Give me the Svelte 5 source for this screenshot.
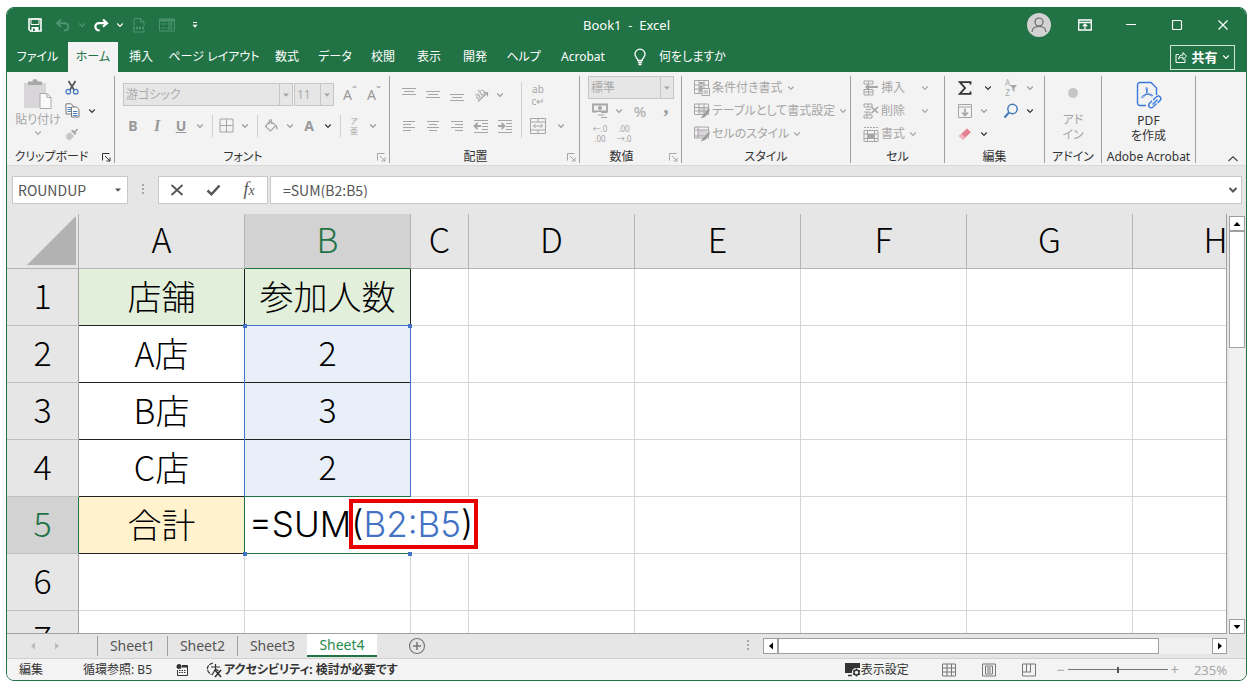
<script lang="ts">
  type Icon = [number, number, string];

  const line = 'fill="none" stroke="currentColor"';

  const icons: Record<string, Icon> = {
    chev: [8, 8, `<path d="M1.2 2.5 4 5.3 6.8 2.5" ${line} stroke-width="1.2"/>`],
    up: [12, 8, `<path d="M1.5 6 6 1.8 10.500 6" ${line} stroke-width="1.2"/>`],
    caret: [8, 6, '<path d="M1 1.500h6L4 4.800z" fill="currentColor"/>'],
    save: [14, 14, `<path d="M1 1h12v12H2.500L1 11.500z" ${line} stroke-width="1.600"/><path d="M3 1h8v5.500H3z" fill="none" stroke="currentColor"/><path d="M3.500 9h7v4.500h-7z" fill="currentColor"/><path d="M5 10.500h1.800V13H5z" fill="#217346"/>`],
    undo: [16, 14, `<path d="M6 1.500 2 5.200l4 3.600M2.300 5.200h7.500c5 0 5 7.300-1 7.300" ${line} stroke-width="1.900"/>`],
    redo: [16, 14, `<path d="M10 1.500 14 5.200l-4 3.600M13.700 5.200H6.200c-5.300 0-5 7 .5 7.300" ${line} stroke-width="2.200"/>`],
    page: [14, 16, `<path d="M2 9V1.500h6.500L12 5v4M8.500 1.500V5H12M2 13v2h10v-2" ${line}/><path d="M1 11h12" ${line} stroke-width="2.500" stroke-dasharray="2 1"/>`],
    form: [16, 14, `<path d="M.500 1h15v12H.500z" ${line}/><path d="M1 2.500h14" ${line} stroke-width="2"/><path d="M2.500 6h4M2.500 10h4M9 5h4v2H9zM9 9h4v2H9z" ${line}/>`],
    more: [8, 8, `<path d="M2 1.500h4" ${line}/><path d="M1.500 3.800h5L4 6.800z" fill="currentColor"/>`],
    user: [24, 24, '<circle cx="12" cy="12" r="12" fill="#d2d2d2"/><circle cx="12" cy="9" r="4" fill="none" stroke="#666" stroke-width="1.200"/><path d="M5 19c0-7.500 14-7.500 14 0" fill="none" stroke="#666" stroke-width="1.200"/>'],
    ribbonOpts: [14, 12, `<path d="M.700 1h12.600v10H.700zM1 3.500h12" ${line} stroke-width="1.300"/><path d="M7 10V5.500M4.800 7.300 7 5.200l2.200 2.100" ${line} stroke-width="1.300"/>`],
    min: [12, 12, `<path d="M1 5.500h10" ${line} stroke-width="1.200"/>`],
    max: [12, 12, `<rect x="1.500" y="1.500" width="9" height="9" rx="1" ${line} stroke-width="1.200"/>`],
    close: [12, 12, `<path d="m1.500 1.500 9 9m0-9-9 9" ${line} stroke-width="1.200"/>`],
    bulb: [14, 18, `<path d="M4.800 12.500c0-2.300-2.800-3-2.800-6.300a5 5 0 0 1 10 0c0 3.300-2.800 4-2.800 6.300zM5 14.500h4M5.500 16.500h3" ${line} stroke-width="1.300"/>`],
    share: [12, 12, `<path d="M4 3.500H1v8h9V8" ${line}/><path d="M3.500 8c.5-3 2-4 4.500-4V1.500l3.500 3.700L8 8.500V6.300c-2 0-3.500.4-4.500 1.700z" ${line}/>`],
    paste: [30, 32, '<path d="M1 5h22v25H1z" fill="#d9d6da"/><path d="M5 3.500h4.500a2.500 2.500 0 0 1 5 0H19V7H5z" fill="#a8a8a8"/><path d="M17 15.500h7l4 4v11H17z" fill="#fafafa" stroke="#aaa"/><path d="M24 15.500v4h4" fill="none" stroke="#aaa"/>'],
    cut: [14, 15, '<path d="m3.500 1 6 9.500M10.500 1l-6 9.500" fill="none" stroke="#555" stroke-width="1.700"/><circle cx="3.300" cy="11.700" r="2.300" fill="none" stroke="#4a80c0" stroke-width="1.300"/><circle cx="10.700" cy="11.700" r="2.300" fill="none" stroke="#4a80c0" stroke-width="1.300"/>'],
    copy: [15, 15, '<path d="M1 .800h5L8.500 3v8H1z" fill="#fff" stroke="#777"/><path d="M2.500 4.500h4M2.500 6.500h4M2.500 8.500h4" stroke="#4a80c0"/><path d="M6.500 4h4.800L14 6.500V14H6.500z" fill="#fff" stroke="#777"/><path d="M8 8.500h4.500M8 10.500h4.500M8 12.500h4.500" stroke="#4a80c0"/>'],
    brush: [14, 14, '<path d="m1 8 4-3 4 4-4 4.500L1.500 12z" fill="#c8c5c8"/><path d="m6 4 4 4 1.500-1.500-4-4z" fill="#aaa"/><path d="m9 4.500 3.500-3L13 2.500 10 5.800z" fill="#999"/>'],
    launch: [9, 9, `<path d="M.500 7.500v-7h7M3 3l5 5M8 4.500V8H4.500" ${line}/>`],
    grid: [15, 15, `<path d="M1 1h13v13H1zM7.500 1v13M1 7.500h13" ${line}/>`],
    bucket: [15, 14, `<path d="M6 2 1.500 7.500 6.500 12 12 6.500 6.500 2.500M5.500 5V1.500c0-1 2-1 2 0V5" ${line} stroke-width="1.200"/><path d="M12 6c1.500 1 2 2.500 1.300 5-1.300-.500-1.500-2.500-1.300-5z" fill="currentColor"/>`],
    alignT: [16, 16, `<path d="M1 1.500h14M3 4.500h10M1 7.500h14" ${line}/>`],
    alignM: [16, 16, `<path d="M1 4.500h14M3 7.500h10M1 10.500h14" ${line}/>`],
    alignB: [16, 16, `<path d="M1 7.500h14M3 10.500h10M1 13.500h14" ${line}/>`],
    left: [14, 12, `<path d="M1 1.500h12M1 4.500h8M1 7.500h12M1 10.500h8" ${line}/>`],
    center: [14, 12, `<path d="M1 1.500h12M3 4.500h8M1 7.500h12M3 10.500h8" ${line}/>`],
    right: [14, 12, `<path d="M1 1.500h12M5 4.500h8M1 7.500h12M5 10.500h8" ${line}/>`],
    outdent: [16, 14, `<path d="M1 1.500h14M9 4.500h6M9 7.500h6M9 10.500h6M1 13.500h14" ${line}/><path d="M8 7H2m2.500-3-3 3 3 3" ${line} stroke-width="1.800"/>`],
    indent: [16, 14, `<path d="M1 1.500h14M9 4.500h6M9 7.500h6M9 10.500h6M1 13.500h14" ${line}/><path d="M1 7h6M4.500 4l3 3-3 3" ${line} stroke-width="1.800"/>`],
    orient: [20, 20, `<text x="4" y="13" font-size="10" transform="rotate(-38 8 11)" fill="currentColor">ab</text><path d="M7 16.500 16 8M16.500 11.500v-4h-4" ${line} stroke-width="1.200"/>`],
    merge: [16, 16, `<path d="M.500 .500h15v15H.500zM.500 4h15M.500 12h15M8 .500V4M8 12v3.500M3.500 8h9M5.500 6l-2 2 2 2M10.500 6l2 2-2 2" ${line}/>`],
    money: [16, 16, `<path d="M1 1.500h14v7H1z" ${line} stroke-width="1.800"/><circle cx="8" cy="5" r="2" fill="currentColor"/><path d="M5 9h10v7H5z" fill="#f3f3f3"/><path d="M9 9.500h6M6 12h6M9 14.500h6" ${line} stroke-width="1.200"/>`],
    cond: [16, 16, `<path d="M.500 .500h14v13H.500zM5 .500v13M10 .500v13M.500 5h14M.500 9h14" ${line}/><path d="M5.500 2h4v2h-4zM5.500 6h3v6h-3z" fill="currentColor"/><path d="M8 8.500h7.500v7H8z" fill="#f3f3f3" stroke="currentColor"/><path d="M9.500 11h4.500M9.500 13h4.500" ${line}/>`],
    fmt: [16, 16, `<path d="M5 4.500h9v6H5z" fill="#d9d3da"/><path d="M.500 1h14v10.500H.500zM5 1v10.500M10 1v10.500M.500 4.500h14M.500 8h14" ${line}/><path d="m15.500 5-6 6.500-3 4 4.500-1.500 4.500-6z" fill="#999"/>`],
    style: [16, 16, `<path d="M4 4h9v6H4z" fill="#d9d3da"/><path d="M.500 1h14v11H.500zM4 1v11M.500 4h14M.500 10h10" ${line}/><path d="m15.500 5-6 6.500-3 4 4.500-1.500 4.500-6z" fill="#999"/>`],
    ins: [16, 16, `<path d="M1 1h9v3H1zM1 12h9v3H1zM1 9.500h9V12M1 9.500V12M5.500 1v3M5.500 9.500V15" ${line}/><path d="M3 7h12M5.500 4.800 3.200 7l2.300 2.200" ${line} stroke-width="1.800"/>`],
    del: [16, 16, `<path d="M1 1h8v3H1zM1 12h8v3H1zM1 9h6v3M5 1v3M4 9v6M3 6.500h5" ${line}/><path d="m8.500 4 6.500 6m0-6-6.500 6" ${line} stroke-width="1.700"/>`],
    cellFmt: [16, 16, `<path d="M1 4.500h14v11H1zM4.500 4.500v11M11.500 4.500v11M1 8h14M1 12.500h14" ${line}/><path d="M5 8h6v4.500H5z" fill="currentColor"/><path d="M1 1.500h14" ${line} stroke-dasharray="2 1"/>`],
    sum: [14, 14, `<path d="M12.500 3.500V1.200H1.800L7 7l-5.200 5.800h10.700v-2.300" ${line} stroke-width="1.800"/>`],
    funnel: [7, 8, '<path d="M0 1h7L4.500 4v3.500l-2-1V4z" fill="currentColor"/>'],
    fill: [14, 14, `<path d="M.500 .500h13v13H.500zM.500 3h13" ${line}/><path d="M7 4.500v7M4 8.500l3 3 3-3" ${line} stroke-width="1.700"/>`],
    find: [16, 16, '<circle cx="9.500" cy="6" r="4.700" fill="none" stroke="#3f78bd" stroke-width="1.500"/><path d="M6 9.500 1.500 14.500" stroke="#3f78bd" stroke-width="2"/>'],
    eraser: [14, 14, '<path d="m1 9 8-7.500 4 3.700L5 12.700z" fill="#e4808f"/><path d="m1 9 2.500-2.300 4 3.700L5 12.700z" fill="#f2b3bc"/>'],
    dot: [12, 12, '<circle cx="6" cy="6" r="5" fill="#c6c6c6"/>'],
    pdf: [26, 30, '<path d="M10 24.500H4A2.500 2.500 0 0 1 1.500 22V4A2.500 2.500 0 0 1 4 1.500h11l5.500 5.500v7" fill="none" stroke="#3b78dc" stroke-width="1.400"/><path d="M10.500 6.500c1.500 0 1 3-.200 5.500-1.300 2.700-3.300 5.200-4.500 4.700-1.500-1 3.200-3.200 6.200-3.500 2.500-.300 4.800.300 4.500 1.500-.500 1-3.500-.800-5-3-1.200-2-2-5.200-1-5.200z" fill="none" stroke="#3b78dc"/><path d="m17 19 3.500-3.200c2.800-2 5.800 1 3.500 3.800l-2.500 2.500M20.500 22.500 17 26c-2.800 2-5.800-1-3.500-3.800l2.500-2.500M16.500 23.500l5-5" fill="none" stroke="#3b78dc" stroke-width="1.400"/>'],
    grip: [4, 14, '<path d="M1 1h2v2H1zM1 5h2v2H1zM1 9h2v2H1z" fill="#a8a8a8"/>'],
    cancel: [14, 12, `<path d="m1.500 1 11 10M12.500 1l-11 10" ${line} stroke-width="1.800"/>`],
    check: [15, 12, `<path d="m1.500 6.500 4 3.800L13.500 1.500" ${line} stroke-width="2.500"/>`],
    down: [10, 8, `<path d="M1.500 2 5 5.500 8.500 2" ${line} stroke-width="2"/>`],
    triL: [6, 8, '<path d="M5 .500v7L1 4z" fill="currentColor"/>'],
    triR: [6, 8, '<path d="M1 .500v7L5 4z" fill="currentColor"/>'],
    triU: [8, 6, '<path d="M.500 5h7L4 1z" fill="currentColor"/>'],
    triD: [8, 6, '<path d="M.500 1h7L4 5z" fill="currentColor"/>'],
    corner: [50, 50, '<path d="M50 0v49H1z" fill="#b2b2b2"/>'],
    add: [18, 18, `<circle cx="9" cy="9" r="7.500" ${line} stroke-width="1.200"/><path d="M9 5v8M5 9h8" ${line} stroke-width="1.500"/>`],
    macro: [12, 12, `<circle cx="3" cy="2.500" r="2.500" fill="currentColor"/><path d="M6 1.500h5.500v10h-10V6" ${line}/><path d="M6 2.500h5.500" ${line} stroke-width="2"/><path d="M3 6.500h7M3 8.500h7" ${line} stroke-dasharray="1.500 1"/>`],
    a11y: [17, 16, `<path d="M7 1C-.500 3 0 10 5.500 12.500" ${line} stroke-dasharray="4 1" stroke-width="1.200"/><path d="M5 5h9M9.500 2v5l-3.500 6M9.500 7l3 2" ${line} stroke-width="1.200"/><path d="m9 8 6 7m0-7-6 7" ${line} stroke-width="1.600"/>`],
    display: [16, 15, `<path d="M0 1h15v5h-4a4 4 0 0 0-4 5H0z" fill="currentColor"/><path d="M3 13.500h4" ${line} stroke-width="1.500"/><circle cx="11.500" cy="10.500" r="2.500" ${line} stroke-width="1.500"/><path d="M11.500 6.500V8M11.500 13v1.500M8 8.500l1.300.8M13.800 11.700l1.300.8M8 12.500l1.300-.8M13.800 9.300l1.300-.8" ${line} stroke-width="1.300"/>`],
    viewNormal: [14, 14, `<path d="M.500 1h13v12H.500zM5 1v12M9.500 1v12M.500 5h13M.500 9h13" ${line}/>`],
    viewPage: [14, 14, `<path d="M.500 1h13v12H.500zM3.500 3h7v8h-7zM5 5h4M5 7h4M5 9h4" ${line}/>`],
    viewBreak: [14, 14, `<path d="M.500 1h13v12H.500zM4.500 1v8M8.500 1v8M.500 9h8.500" ${line}/>`],
  };

  const tabs = ['ファイル', 'ホーム', '挿入', 'ページ レイアウト', '数式', 'データ', '校閲', '表示', '開発', 'ヘルプ', 'Acrobat'];
  const columns = ['A', 'B', 'C', 'D', 'E', 'F', 'G', 'H'];
  const blanks = columns.slice(2);
  const rows = [
    { a: '店舗', b: '参加人数', kind: 'head' },
    { a: 'A店', b: '2', kind: 'data' },
    { a: 'B店', b: '3', kind: 'data' },
    { a: 'C店', b: '2', kind: 'data' },
    { a: '合計', b: '', kind: 'total' },
    { a: '', b: '', kind: '' },
    { a: '', b: '', kind: '' },
  ];
  const sheets = ['Sheet1', 'Sheet2', 'Sheet3', 'Sheet4'];

  let activeTab = 'ホーム';
  let activeSheet = 'Sheet4';
  let nameBox = 'ROUNDUP';
  let formula = '=SUM(B2:B5)';
  let zoom = 50;
</script>

{#snippet icon(name: string)}
  <svg class="icon" width={icons[name][0]} height={icons[name][1]} viewBox="0 0 {icons[name][0]} {icons[name][1]}" aria-hidden="true">{@html icons[name][2]}</svg>
{/snippet}

{#snippet tool(name: string, label: string)}
  <button class="tool" aria-label={label}>{@render icon(name)}</button>
{/snippet}

{#snippet chev(label: string, dark = false)}
  <button class="chev" class:dark aria-label={label}>{@render icon('chev')}</button>
{/snippet}

{#snippet combo(value: string, label: string)}
  <div class="combo">
    <select aria-label={label} disabled><option>{value}</option></select>
    <span class="combo-arrow">{@render icon('caret')}</span>
  </div>
{/snippet}

{#snippet foot(label: string, launcher = '')}
  <div class="foot" class:has-launcher={launcher}>
    <span>{label}</span>
    {#if launcher}
      <button class="launcher {launcher}" aria-label="{label}の設定">{@render icon('launch')}</button>
    {/if}
  </div>
{/snippet}

<div class="window">
  <header>
    <div class="titlebar">
      <div class="quick">
        <button class="tool" aria-label="上書き保存">{@render icon('save')}</button>
        <button class="tool faded" aria-label="元に戻す">{@render icon('undo')}</button>
        <button class="chev faded" aria-label="元に戻す履歴">{@render icon('chev')}</button>
        <button class="tool" aria-label="やり直し">{@render icon('redo')}</button>
        <button class="chev" aria-label="やり直し履歴">{@render icon('chev')}</button>
        <button class="tool faded" aria-label="印刷プレビュー">{@render icon('page')}</button>
        <button class="tool faded" aria-label="フォーム">{@render icon('form')}</button>
        <button class="tool" aria-label="カスタマイズ">{@render icon('more')}</button>
      </div>
      <h1>Book1&nbsp; -&nbsp; Excel</h1>
      <div class="controls">
        <button aria-label="アカウント">{@render icon('user')}</button>
        <button aria-label="リボンの表示オプション">{@render icon('ribbonOpts')}</button>
        <button aria-label="最小化">{@render icon('min')}</button>
        <button aria-label="最大化">{@render icon('max')}</button>
        <button aria-label="閉じる">{@render icon('close')}</button>
      </div>
    </div>
    <div class="tabbar">
      <nav>
        {#each tabs as tab}
          <button class:active={tab === activeTab} on:click={() => (activeTab = tab)}>{tab}</button>
        {/each}
      </nav>
      <button class="tell">{@render icon('bulb')}何をしますか</button>
      <button class="share">{@render icon('share')}<b>共有</b>{@render icon('chev')}</button>
    </div>
  </header>

  <div class="ribbon">
    <section class="group clipboard">
      <div class="body">
        <button class="big">{@render icon('paste')}<span>貼り付け</span>{@render icon('chev')}</button>
        <div class="stack">
          <div class="line">{@render tool('cut', '切り取り')}</div>
          <div class="line">{@render tool('copy', 'コピー')}{@render chev('コピーのオプション', true)}</div>
          <div class="line">{@render tool('brush', '書式のコピー')}</div>
        </div>
      </div>
      {@render foot('クリップボード', 'dark')}
    </section>

    <section class="group font">
      <div class="body two">
        <div class="line">
          <div class="font-name">{@render combo('游ゴシック', 'フォント')}</div>
          <div class="font-size">{@render combo('11', 'フォント サイズ')}</div>
          <button class="tool glyph" aria-label="フォント サイズの拡大">A<sup>ˆ</sup></button>
          <button class="tool glyph" aria-label="フォント サイズの縮小">A<sup>ˇ</sup></button>
        </div>
        <div class="line">
          <button class="tool glyph"><b>B</b></button>
          <button class="tool glyph serif"><i>I</i></button>
          <button class="tool glyph"><b><u>U</u></b></button>
          {@render chev('下線')}
          <span class="rule"></span>
          {@render tool('grid', '罫線')}{@render chev('罫線の種類')}
          <span class="rule"></span>
          {@render tool('bucket', '塗りつぶし')}{@render chev('塗りつぶしの色')}
          <button class="tool glyph"><b>A</b></button>{@render chev('フォントの色', true)}
          <span class="rule"></span>
          <button class="tool ruby"><span>ア</span><span>亜</span></button>{@render chev('ふりがな')}
        </div>
      </div>
      {@render foot('フォント', 'dim')}
    </section>

    <section class="group align">
      <div class="body">
        <div class="two align-left">
          <div class="line">
            {@render tool('alignT', '上揃え')}{@render tool('alignM', '上下中央揃え')}{@render tool('alignB', '下揃え')}
            {@render tool('orient', '方向')}{@render chev('方向の種類')}
          </div>
          <div class="line">
            {@render tool('left', '左揃え')}{@render tool('center', '中央揃え')}{@render tool('right', '右揃え')}
            {@render tool('outdent', 'インデントを減らす')}{@render tool('indent', 'インデントを増やす')}
          </div>
        </div>
        <span class="rule tall"></span>
        <div class="two">
          <div class="line"><button class="tool wrap"><span>ab</span><span>c↵</span></button></div>
          <div class="line merge">{@render tool('merge', 'セルを結合して中央揃え')}{@render chev('結合の種類')}</div>
        </div>
      </div>
      {@render foot('配置', 'dim')}
    </section>

    <section class="group number">
      <div class="body stack">
        <div class="line">{@render combo('標準', '数値の書式')}</div>
        <div class="line">
          {@render tool('money', '通貨')}{@render chev('通貨の種類')}
          <button class="tool percent">%</button>
          <button class="tool glyph serif comma"><b>,</b></button>
        </div>
        <div class="line">
          <button class="tool digits"><span>←.0</span><span>.00</span></button>
          <button class="tool digits"><span>.00</span><span>→.0</span></button>
        </div>
      </div>
      {@render foot('数値', 'dim')}
    </section>

    <section class="group styles">
      <div class="body stack">
        <button class="item">{@render icon('cond')}<span>条件付き書式</span>{@render icon('chev')}</button>
        <button class="item">{@render icon('fmt')}<span>テーブルとして書式設定</span>{@render icon('chev')}</button>
        <button class="item">{@render icon('style')}<span>セルのスタイル</span>{@render icon('chev')}</button>
      </div>
      {@render foot('スタイル')}
    </section>

    <section class="group cells">
      <div class="body stack">
        <button class="item spread">{@render icon('ins')}<span>挿入</span>{@render icon('chev')}</button>
        <button class="item spread">{@render icon('del')}<span>削除</span>{@render icon('chev')}</button>
        <button class="item">{@render icon('cellFmt')}<span>書式</span>{@render icon('chev')}</button>
      </div>
      {@render foot('セル')}
    </section>

    <section class="group edit">
      <div class="body">
        <div class="stack">
          <div class="line dark wide-chev">{@render tool('sum', 'オート SUM')}{@render chev('集計方法', true)}</div>
          <div class="line">{@render tool('fill', 'フィル')}{@render chev('フィルの種類')}</div>
          <div class="line">{@render tool('eraser', 'クリア')}{@render chev('クリアの種類', true)}</div>
        </div>
        <div class="stack">
          <div class="line">
            <button class="tool sort"><span class="digits"><span>A</span><span>Z</span></span>{@render icon('funnel')}</button>
            {@render chev('並べ替えの種類')}
          </div>
          <div class="line">{@render tool('find', '検索と選択')}{@render chev('検索の種類', true)}</div>
        </div>
      </div>
      {@render foot('編集')}
    </section>

    <section class="group addin">
      <div class="body">
        <button class="big">{@render icon('dot')}<span>アド<br />イン</span></button>
      </div>
      {@render foot('アドイン')}
    </section>

    <section class="group acrobat">
      <div class="body">
        <button class="big dark">{@render icon('pdf')}<span>PDF<br />を作成</span></button>
      </div>
      {@render foot('Adobe Acrobat')}
    </section>

    <button class="collapse" aria-label="リボンを折りたたむ">{@render icon('up')}</button>
  </div>

  <div class="formula-bar">
    <div class="name-box">
      <input aria-label="名前ボックス" bind:value={nameBox} />
      <button aria-label="名前の一覧">{@render icon('caret')}</button>
    </div>
    <span class="grip">{@render icon('grip')}</span>
    <div class="entry-tools">
      <button aria-label="キャンセル">{@render icon('cancel')}</button>
      <button aria-label="入力">{@render icon('check')}</button>
      <button class="fx"><i>f<small>x</small></i></button>
    </div>
    <div class="formula">
      <input aria-label="数式バー" bind:value={formula} />
      <button aria-label="数式バーの展開">{@render icon('down')}</button>
    </div>
  </div>

  <main>
    <div class="pane">
      <table>
        <colgroup>
          <col class="c-num" />
          {#each columns as c}<col class={c === 'C' ? 'c-narrow' : 'c-wide'} />{/each}
        </colgroup>
        <thead>
          <tr>
            <td class="all">{@render icon('corner')}</td>
            {#each columns as c}<th scope="col" class:current={c === 'B'}>{c}</th>{/each}
          </tr>
        </thead>
        <tbody>
          {#each rows as row, i}
            <tr class={row.kind}>
              <th scope="row" class:current={i === 4}>{i + 1}</th>
              <td class="a">{row.a}</td>
              <td class="b">
                {#if i === 1}
                  <div class="range"><i></i><i></i><i></i><i></i></div>
                {/if}
                {#if row.kind === 'total'}
                  <div class="editing">=SUM<span class="args">(<em>B2:B5</em>)</span></div>
                {:else}
                  {row.b}
                {/if}
              </td>
              {#each blanks as _}<td></td>{/each}
            </tr>
          {/each}
        </tbody>
      </table>
    </div>
    <div class="vscroll">
      <button aria-label="上へスクロール">{@render icon('triU')}</button>
      <span class="thumb"></span>
      <span class="track"></span>
      <button aria-label="下へスクロール">{@render icon('triD')}</button>
    </div>
  </main>

  <div class="sheetbar">
    <div class="sheet-nav">
      <button aria-label="前のシート">{@render icon('triL')}</button>
      <button aria-label="次のシート">{@render icon('triR')}</button>
    </div>
    {#each sheets as sheet}
      <button class="sheet" class:active={sheet === activeSheet} on:click={() => (activeSheet = sheet)}>{sheet}</button>
    {/each}
    <button class="add" aria-label="新しいシート">{@render icon('add')}</button>
    <span class="grip">{@render icon('grip')}</span>
    <div class="hscroll">
      <button aria-label="左へスクロール">{@render icon('triL')}</button>
      <span class="thumb"></span>
      <span class="track"></span>
      <button aria-label="右へスクロール">{@render icon('triR')}</button>
    </div>
  </div>

  <footer>
    <span class="mode">編集</span>
    <span class="circular">循環参照: B5</span>
    <button aria-label="マクロの記録">{@render icon('macro')}</button>
    <button class="a11y">{@render icon('a11y')}<b>アクセシビリティ: 検討が必要です</b></button>
    <button class="display">{@render icon('display')}表示設定</button>
    <div class="views">
      <button aria-label="標準">{@render icon('viewNormal')}</button>
      <button aria-label="ページ レイアウト">{@render icon('viewPage')}</button>
      <button aria-label="改ページ プレビュー">{@render icon('viewBreak')}</button>
    </div>
    <div class="zoom">
      <button>−</button>
      <input type="range" min="0" max="100" aria-label="ズーム" bind:value={zoom} />
      <button>+</button>
      <span>235%</span>
    </div>
  </footer>
</div>

<style>
  :global(body) {
    margin: 0;
    background: #fff;
  }

  .window {
    --green: #217346;
    --ui: 'Noto Sans', 'Noto Sans CJK JP', sans-serif;
    --cell: 'Noto Sans CJK JP', sans-serif;
    display: flex;
    flex-direction: column;
    box-sizing: border-box;
    height: calc(100vh - 14px);
    margin: 7px 8px 7px 6px;
    border: 1px solid var(--green);
    border-radius: 8px;
    overflow: hidden;
    background: #e6e6e6;
    color: #333;
    font-family: var(--ui);
    font-size: 12px;
    line-height: 16px;
    font-feature-settings: 'palt';
    white-space: nowrap;
  }

  button,
  input,
  select {
    font: inherit;
    font-feature-settings: inherit;
    color: inherit;
    background: none;
    border: none;
    border-radius: 0;
    padding: 0;
    margin: 0;
    outline: none;
    min-width: 0;
    box-sizing: border-box;
  }

  button {
    display: flex;
    align-items: center;
    justify-content: center;
    flex: none;
    white-space: nowrap;
  }

  .icon {
    display: block;
    flex: none;
    overflow: visible;
  }

  /* title and tabs */
  header {
    background: var(--green);
    color: #fff;
  }

  .titlebar {
    display: grid;
    grid-template-columns: 1fr auto 1fr;
    align-items: center;
    height: 34px;
  }

  .quick {
    display: flex;
    padding-left: 14px;
  }

  .quick .tool {
    width: 28px;
  }

  .quick .chev {
    width: 10px;
  }

  .quick .chev,
  .quick .tool {
    color: #fff;
  }

  .quick .faded {
    color: #4f9470;
  }

  h1 {
    margin: 0;
    font-size: 13px;
    font-weight: 400;
    line-height: 20px;
  }

  .controls {
    display: flex;
    justify-content: flex-end;
  }

  .controls button {
    width: 46px;
  }

  .tabbar {
    display: flex;
    align-items: center;
    height: 30px;
    padding-right: 11px;
  }

  nav {
    display: grid;
    grid-template-columns: 61px 50px 46px 100px 46px 50px 46px 46px 46px 51px 68px;
    align-self: stretch;
  }

  nav .active {
    background: #f3f3f3;
    color: var(--green);
  }

  .tell {
    gap: 12px;
    margin-left: 16px;
  }

  .share {
    gap: 4px;
    height: 25px;
    width: 65px;
    margin-left: auto;
    border: 1px solid #cfe3d7;
    font-size: 13px;
  }

  /* ribbon */
  .ribbon {
    display: flex;
    height: 94px;
    background: #f3f3f3;
    border-bottom: 1px solid #dadada;
    color: #a6a6a6;
    box-sizing: border-box;
  }

  .group {
    display: flex;
    flex-direction: column;
    justify-content: space-between;
    box-sizing: border-box;
    flex: none;
    margin: 4px 0 2px;
    border-right: 1px solid #a0a0a0;
  }

  .clipboard { width: 108px; }
  .font { width: 275px; }
  .align { width: 190px; }
  .number { width: 102px; }
  .styles { width: 169px; }
  .cells { width: 94px; }
  .edit { width: 100px; }
  .addin { width: 57px; }
  .acrobat { width: 94px; }

  .body {
    display: flex;
  }

  .stack,
  .two {
    display: flex;
    flex-direction: column;
  }

  .line {
    display: flex;
    align-items: center;
    height: 23px;
  }

  .two {
    padding-top: 3px;
  }

  .two .line {
    height: 31px;
  }

  .tool {
    width: 24px;
    height: 22px;
  }

  .chev {
    width: 14px;
    height: 22px;
    color: #999;
  }

  .dark {
    color: #333;
  }

  .rule {
    width: 1px;
    height: 22px;
    margin: 0 1px 0 5px;
    background: #d0d0d0;
  }

  .rule.tall {
    height: 56px;
    margin: 6px 4px 0 2px;
  }

  .foot {
    position: relative;
    display: flex;
    justify-content: center;
    color: #333;
    line-height: 12px;
  }

  .has-launcher {
    padding-right: 18px;
  }

  .launcher {
    position: absolute;
    right: 3px;
    top: 2px;
  }

  .dim {
    color: #a6a6a6;
  }

  .big {
    flex-direction: column;
    justify-content: flex-start;
    line-height: 15px;
    gap: 2px;
  }

  .clipboard .big {
    width: 46px;
    margin-left: 8px;
    padding-top: 2px;
  }

  .clipboard .stack .line {
    gap: 2px;
  }

  .clipboard .tool {
    width: 22px;
  }

  .font .body {
    padding-left: 6px;
  }

  .combo {
    display: flex;
    flex: 1;
    height: 23px;
    box-sizing: border-box;
    border: 1px solid #c6c6c6;
    background: #e6e6e6;
  }

  .combo select {
    flex: 1;
    appearance: none;
    padding-left: 2px;
    color: #aaa;
    opacity: 1;
  }

  .combo-arrow {
    display: flex;
    align-items: center;
    justify-content: center;
    width: 12px;
    border-left: 1px solid #c6c6c6;
  }

  .font-name {
    display: flex;
    width: 170px;
    margin-left: 2px;
  }

  .font-size {
    display: flex;
    width: 40px;
    margin: 0 4px 0 1px;
  }

  .glyph {
    font-size: 14px;
    color: #999;
  }

  .glyph sup {
    font-size: 12px;
    line-height: 16px;
    align-self: flex-start;
  }

  .serif {
    font-family: 'Liberation Serif', serif;
    font-size: 16px;
    font-weight: 700;
  }

  .comma {
    font-size: 20px;
    line-height: 12px;
    align-items: flex-start;
  }

  .percent {
    width: 28px;
    font-size: 15px;
  }

  .ruby,
  .digits,
  .wrap {
    display: flex;
    flex-direction: column;
    font-size: 8px;
    line-height: 10px;
  }

  .wrap {
    font-size: 10px;
    line-height: 12px;
  }

  .align-left {
    padding-left: 7px;
    box-sizing: border-box;
    flex: 0 0 129px;
  }

  .merge {
    gap: 4px;
  }

  .number .body {
    padding-left: 8px;
  }

  .number .line:first-child {
    padding-right: 7px;
  }

  .item {
    justify-content: flex-start;
    height: 23px;
    gap: 2px;
  }

  .item span {
    margin-right: 2px;
  }

  .styles .body,
  .cells .body {
    padding-left: 12px;
  }

  .item.spread span {
    margin-right: 14px;
  }

  .edit .body {
    padding-left: 8px;
    gap: 4px;
  }

  .wide-chev {
    gap: 4px;
  }

  .sort {
    align-items: center;
  }

  .addin .big,
  .acrobat .big {
    width: 100%;
    padding-top: 5px;
  }

  .addin .big {
    padding-top: 11px;
    gap: 13px;
  }

  .collapse {
    align-self: flex-end;
    margin: 0 7px 2px auto;
    color: #444;
  }

  /* formula bar */
  .formula-bar {
    display: flex;
    align-items: center;
    height: 48px;
    padding: 0 4px 0 5px;
    box-sizing: border-box;
    font-family: var(--cell);
    font-size: 14px;
    color: #555;
    font-feature-settings: normal;
  }

  .name-box,
  .entry-tools,
  .formula {
    display: flex;
    height: 28px;
    box-sizing: border-box;
    border: 1px solid #c8c8c8;
    background: #fff;
  }

  .name-box {
    width: 116px;
  }

  .name-box input {
    flex: 1;
    padding-left: 5px;
  }

  .name-box button {
    width: 18px;
  }

  .formula-bar .grip {
    padding: 0 13px;
  }

  .entry-tools {
    width: 110px;
    margin-right: 2px;
  }

  .entry-tools button {
    flex: 1;
  }

  .fx {
    font-family: 'Liberation Serif', serif;
    font-size: 18px;
  }

  .fx small {
    font-size: 14px;
  }

  .formula {
    flex: 1;
  }

  .formula input {
    flex: 1;
    padding-left: 12px;
  }

  .formula button {
    width: 16px;
  }

  /* sheet */
  main {
    display: flex;
    flex: 1;
    min-height: 0;
  }

  .pane {
    flex: 1;
    min-width: 0;
    overflow: hidden;
    border-right: 1px solid #a0a0a0;
    border-bottom: 1px solid #a0a0a0;
  }

  table {
    table-layout: fixed;
    width: 1292px;
    border-collapse: separate;
    border-spacing: 0;
    font-family: var(--cell);
    font-size: 34px;
    font-weight: 300;
    line-height: 40px;
    color: #000;
    font-feature-settings: normal;
  }

  .c-num { width: 72px; }
  .c-wide { width: 166px; }
  .c-narrow { width: 58px; }

  th,
  td {
    height: 57px;
    padding: 0 0 2px;
    box-sizing: border-box;
    text-align: center;
    font-weight: 300;
    border-right: 1px solid #d6d6d6;
    border-bottom: 1px solid #d6d6d6;
  }

  th {
    padding-bottom: 4px;
  }

  thead th,
  thead td {
    height: 55px;
    border-color: #b4b4b4;
  }

  tbody th {
    background: #e6e6e6;
    border-right-color: #a0a0a0;
    border-bottom-color: #c0c0c0;
  }

  tbody td {
    background: #fff;
  }

  th.current {
    background: #d2d2d2;
    color: var(--green);
    border-bottom-color: var(--green);
  }

  tbody th.current {
    border-right-color: var(--green);
    border-bottom-color: #c0c0c0;
  }

  .all .icon {
    margin: 2px 0 0 19px;
  }

  .head .a,
  .data .a,
  .total .a,
  .head .b,
  .data .b {
    border-color: #222;
  }

  .head .a,
  .head .b {
    background: #e2efda;
  }

  .data .b {
    padding-bottom: 4px;
    background: #e9eff9;
    border-right-color: #4472c4;
  }

  .total .a {
    background: #fff2cc;
    border-right-color: var(--green);
  }

  .b {
    position: relative;
  }

  .total .b {
    padding: 0;
    border-color: var(--green);
  }

  .editing {
    position: relative;
    z-index: 1;
    width: max-content;
    padding: 7px 0 9px 4px;
    background: #fff;
    font-family: Inter, var(--cell);
    font-size: 35px;
  }

  .args {
    position: relative;
  }

  .args::after {
    content: '';
    position: absolute;
    inset: -4px -5px -4px -2px;
    border: 4px solid #e80000;
  }

  em {
    font-style: normal;
    color: #4472c4;
  }

  .range {
    position: absolute;
    z-index: 2;
    top: -1px;
    left: -1px;
    width: 167px;
    height: 172px;
    box-sizing: border-box;
    border: 1px solid #4472c4;
    border-bottom-color: var(--green);
  }

  .range i {
    position: absolute;
    width: 4px;
    height: 4px;
    background: #4472c4;
    top: -2px;
    left: -2px;
  }

  .range i:nth-child(2n) {
    left: auto;
    right: -2px;
  }

  .range i:nth-child(n + 3) {
    top: 226px;
  }

  .vscroll {
    display: flex;
    flex-direction: column;
    width: 16px;
    margin: 2px 1px 0 2px;
  }

  .vscroll button,
  .hscroll button,
  .thumb {
    box-sizing: border-box;
    background: #fff;
    border: 1px solid #a0a0a0;
    color: #000;
  }

  .vscroll button {
    height: 15px;
  }

  .vscroll .thumb {
    flex: 0 0 28%;
  }

  .track {
    flex: 1;
    background: #f1f1f1;
  }

  /* sheet tabs */
  .sheetbar {
    display: flex;
    align-items: center;
    height: 25px;
    box-sizing: border-box;
    padding-right: 19px;
    border-bottom: 1px solid #d0d0d0;
    font-size: 14px;
    color: #555;
  }

  .sheet-nav {
    display: flex;
    gap: 18px;
    width: 90px;
    padding-left: 23px;
    box-sizing: border-box;
    color: #bbb;
  }

  .sheet {
    width: 70px;
    height: 20px;
    padding-bottom: 1px;
    border-left: 1px solid #a0a0a0;
  }

  .sheet.active {
    align-self: flex-start;
    height: 23px;
    padding: 1px 0 0;
    border-left: none;
    border-bottom: 2px solid var(--green);
    background: #fff;
    color: #1f8a4c;
  }

  .add {
    margin-left: 31px;
    color: #777;
  }

  .sheetbar .grip {
    margin-left: auto;
  }

  .hscroll {
    display: flex;
    width: 38%;
    height: 16px;
    margin-left: 13px;
  }

  .hscroll button {
    width: 15px;
  }

  .hscroll .thumb {
    flex: 0 0 82%;
  }

  /* status bar */
  footer {
    display: flex;
    align-items: center;
    height: 21px;
    padding: 0 19px 0 12px;
    background: #f3f3f3;
  }

  .circular {
    margin: 0 24px 0 40px;
  }

  .a11y {
    gap: 1px;
    margin-left: 18px;
  }

  .display {
    margin-left: auto;
  }

  .views {
    display: flex;
    gap: 26px;
    margin: 0 18px 0 33px;
    color: #777;
  }

  .zoom {
    display: flex;
    align-items: center;
    color: #a6a6a6;
  }

  .zoom button {
    width: 14px;
    font-size: 14px;
  }

  .zoom input {
    width: 100px;
    height: 16px;
    appearance: none;
    background: linear-gradient(#777, #777) center / 100% 1px no-repeat;
  }

  .zoom input::-webkit-slider-thumb {
    appearance: none;
    width: 2px;
    height: 6px;
    background: #555;
  }

  .zoom span {
    margin-left: 12px;
    font-size: 13px;
  }
</style>
